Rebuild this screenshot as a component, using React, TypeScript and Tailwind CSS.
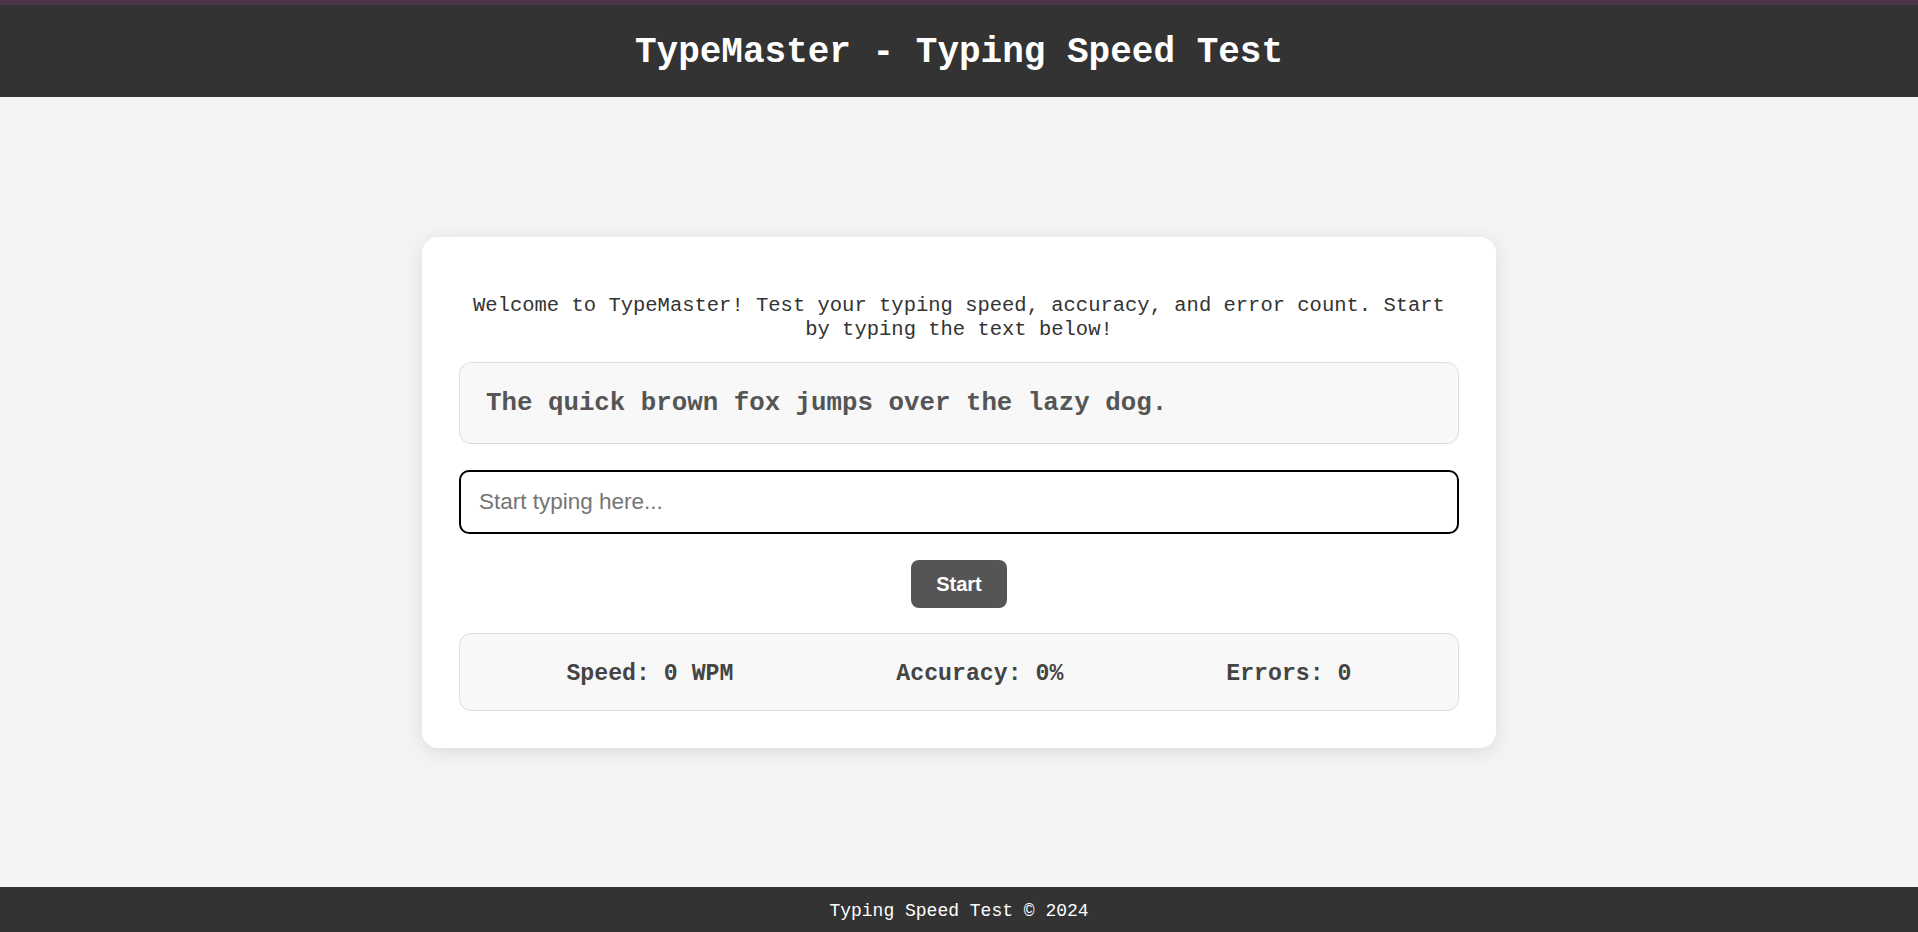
import { useState } from 'react';

const MONO = "font-['Liberation_Mono','DejaVu_Sans_Mono',monospace]";
const SANS = "font-['Liberation_Sans',Arial,sans-serif]";

export default function App() {
  const [value, setValue] = useState('');
  const [stats] = useState({ wpm: 0, accuracy: 0, errors: 0 });

  return (
    <div className={`min-h-screen flex flex-col bg-[#f4f4f4] ${MONO}`}>
      {/* Header */}
      <header className="h-[97px] border-t-[5px] border-[#4a3449] bg-[#333333] flex items-center justify-center pt-[4px]">
        <h1 className="text-[36px] leading-[40px] font-bold text-white">TypeMaster - Typing Speed Test</h1>
      </header>

      {/* Main */}
      <main className="flex-1 flex items-center justify-center">
        <div className="w-[1074px] bg-white rounded-2xl shadow-[0_4px_20px_rgba(0,0,0,0.1)] px-[37px] pt-[57px] pb-[37px] flex flex-col">
          <p className="text-[20.5px] leading-[24px] text-[#333] text-center">
            Welcome to TypeMaster! Test your typing speed, accuracy, and error count. Start by typing the text below!
          </p>

          <div className="mt-[20px] bg-[#f8f8f8] border border-[#dddddd] rounded-xl pl-[26px] pr-[20px] pt-[26px] pb-[24px]">
            <p className="text-[25.8px] leading-[30px] font-bold text-[#555]">The quick brown fox jumps over the lazy dog.</p>
          </div>

          <input
            value={value}
            onChange={e => setValue(e.target.value)}
            placeholder="Start typing here..."
            className={`mt-[26px] h-[64px] w-full border-2 border-black rounded-[10px] px-[18px] text-[22.5px] text-[#333] placeholder:text-[#757575] outline-none ${SANS}`}
          />

          <div className="mt-[26px] flex justify-center">
            <button className={`h-[48px] w-[96px] rounded-lg bg-[#555555] text-white text-[20px] font-bold ${SANS}`}>Start</button>
          </div>

          <div className="mt-[25px] h-[78px] bg-[#f8f8f8] border border-[#dddddd] rounded-xl px-[25px] pt-[5px] flex items-center justify-around text-[23.2px] font-bold text-[#444]">
            <span>Speed: {stats.wpm} WPM</span>
            <span>Accuracy: {stats.accuracy}%</span>
            <span>Errors: {stats.errors}</span>
          </div>
        </div>
      </main>

      {/* Footer */}
      <footer className="h-[45px] bg-[#333333] flex items-center justify-center pt-[3px]">
        <span className="text-[18px] text-white">Typing Speed Test © 2024</span>
      </footer>
    </div>
  );
}
